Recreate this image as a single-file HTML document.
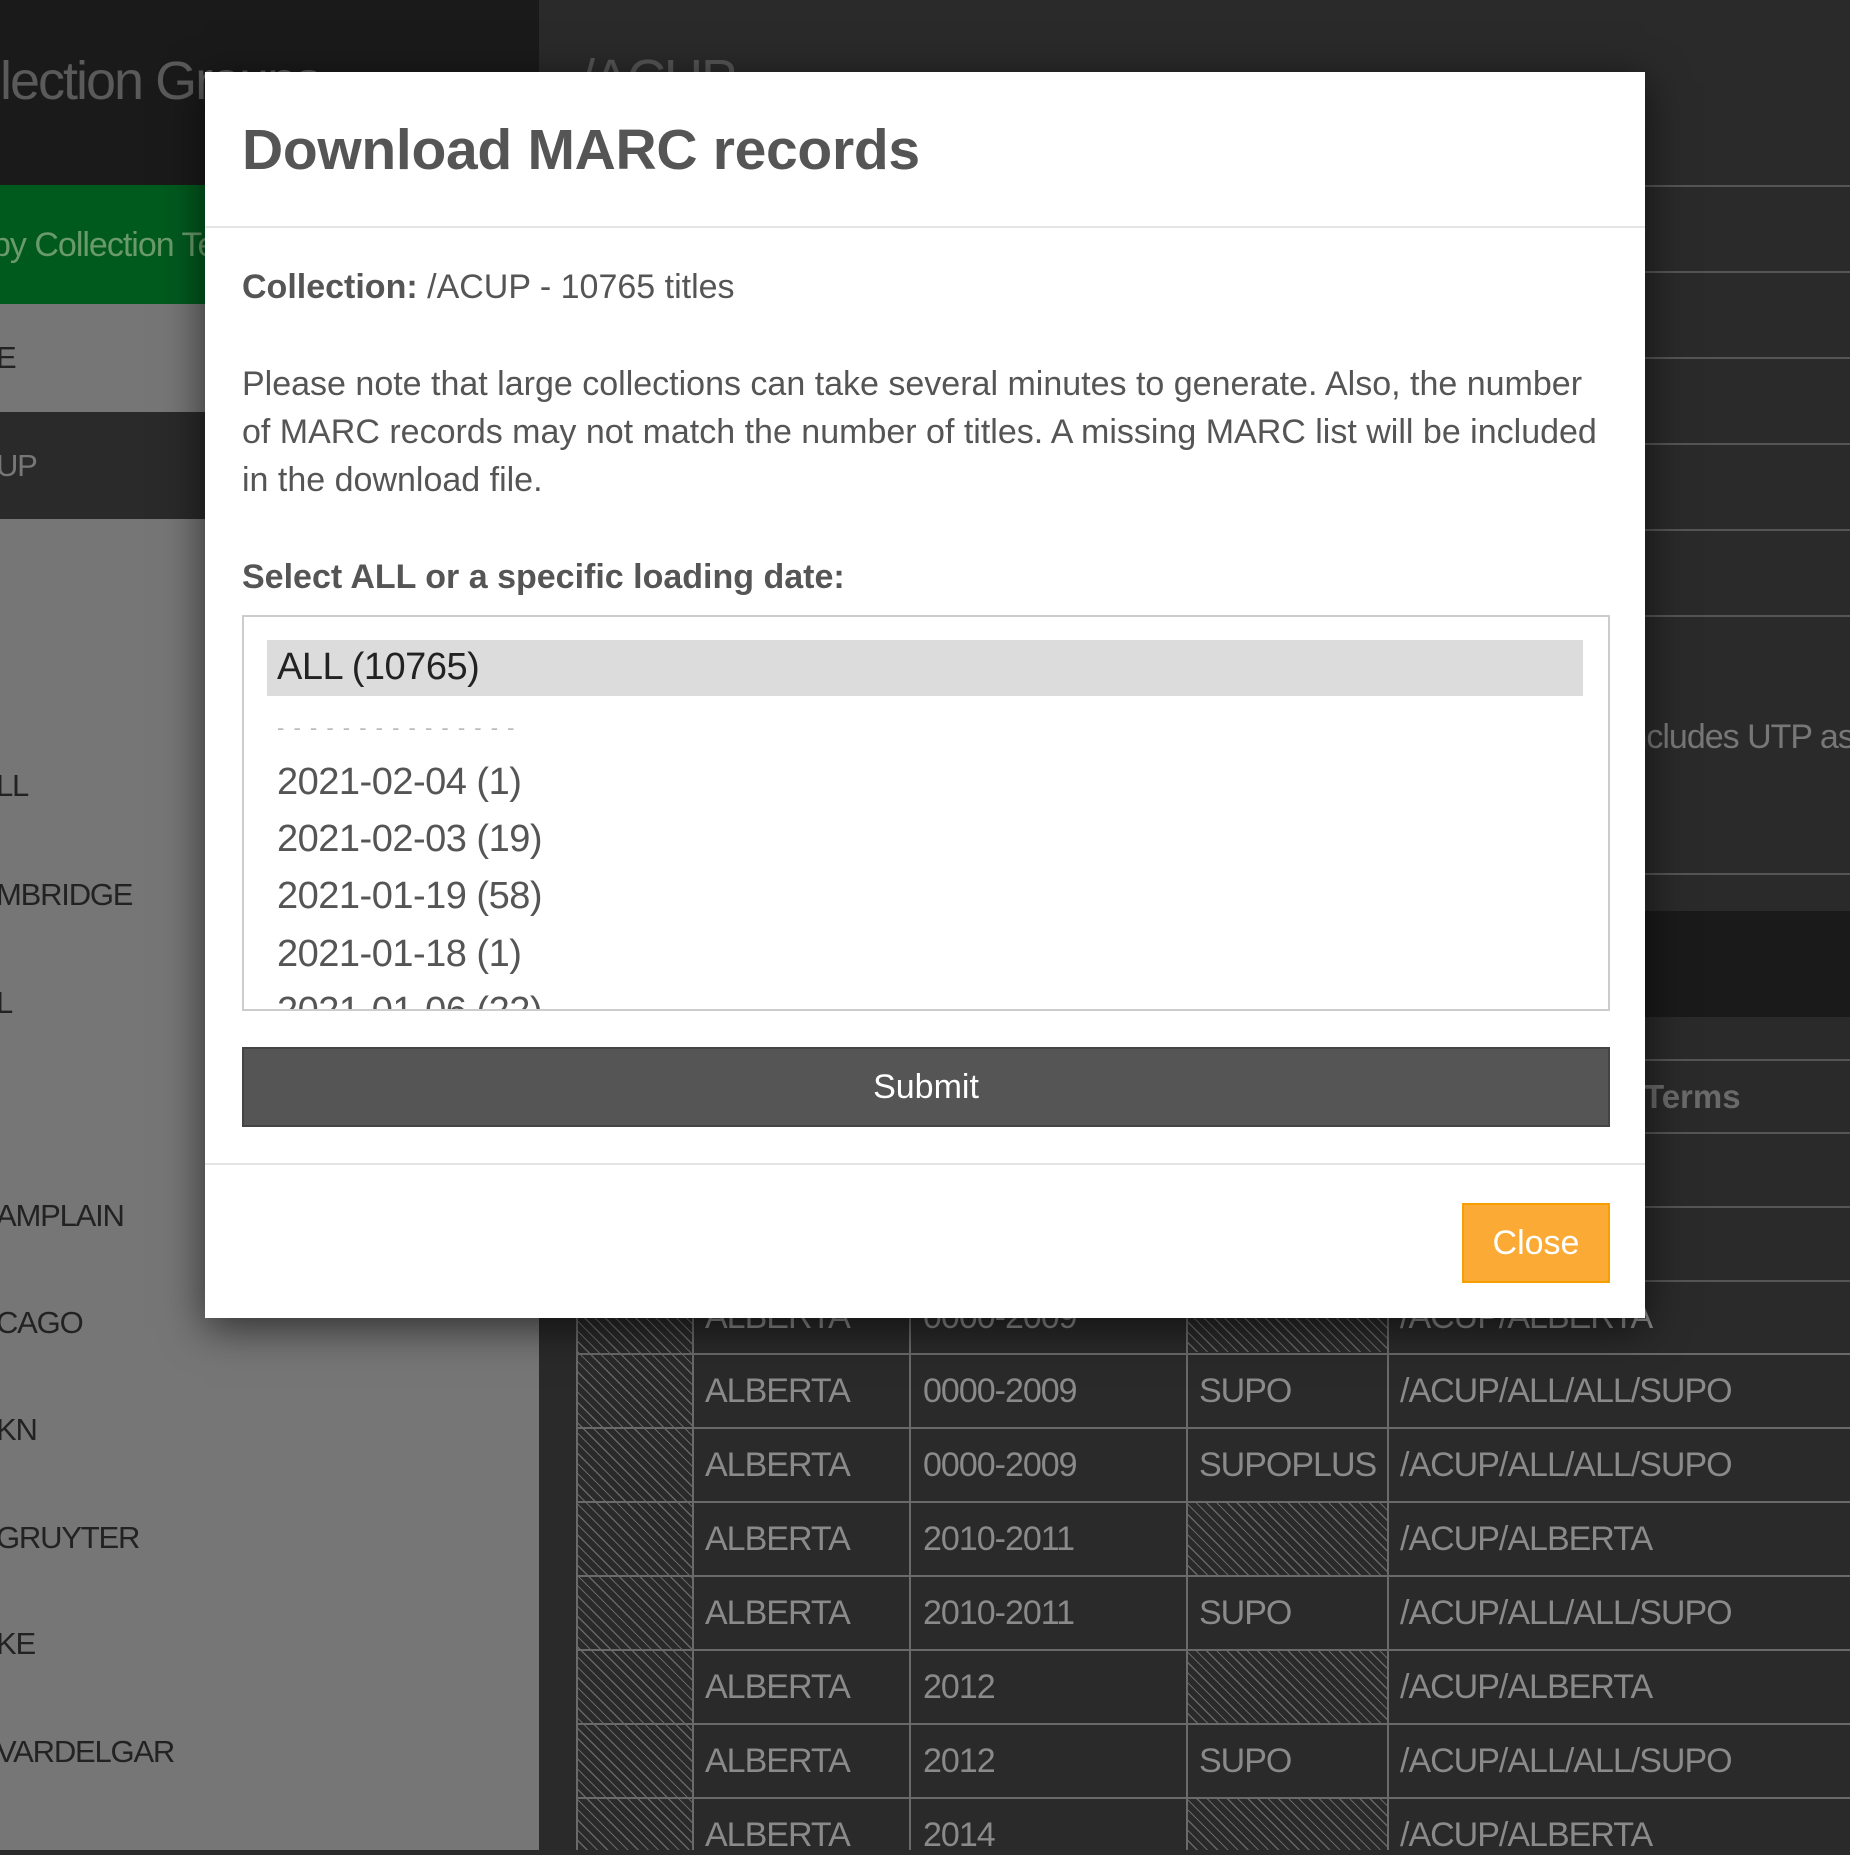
<!DOCTYPE html>
<html><head><meta charset="utf-8"><style>
*{margin:0;padding:0;box-sizing:border-box}
body{width:1850px;height:1850px;overflow:hidden;background:#2a2a2a;font-family:"Liberation Sans",sans-serif;position:relative}
.a{position:absolute;white-space:nowrap}
.side{left:0;top:0;width:539px;height:1850px;background:#767676}
.st{color:#222;font-size:31px;left:-4px;letter-spacing:-1.2px}
.hl{position:absolute;height:2px;background:#555;left:539px;right:0}
.tl{position:absolute;height:2px;background:#6a6a6a;left:576px;right:0}
.vl{position:absolute;width:2px;background:#6a6a6a;top:1290px;bottom:0}
.hat{position:absolute;background:repeating-linear-gradient(45deg,#2a2a2a 0 6px,#666 6px 7.2px)}
.tt{color:#8a8a8a;font-size:34px;letter-spacing:-1px}
.op{position:absolute;left:33px;font-size:38px;color:#555;letter-spacing:-0.5px;white-space:nowrap}
</style></head><body>
<div class="a side"></div>
<div class="a" style="left:0;top:0;width:539px;height:185px;background:#1a1a1a"></div>
<div class="a" style="left:-10px;top:50px;font-size:54px;color:#5a5a5a;letter-spacing:-2px">llection Groups</div>
<div class="a" style="left:0;top:185px;width:539px;height:119px;background:#005a1e"></div>
<div class="a" style="left:-8px;top:226px;font-size:34px;color:#6a9a6a;letter-spacing:-1px">by Collection Terms</div>
<div class="a" style="left:0;top:412px;width:539px;height:107px;background:#2a2a2a"></div>
<div class="a st" style="top:340px">E</div>
<div class="a st" style="top:448px;color:#777">UP</div>
<div class="a st" style="top:768px">LL</div>
<div class="a st" style="top:877px">MBRIDGE</div>
<div class="a st" style="top:985px">L</div>
<div class="a st" style="top:1198px">AMPLAIN</div>
<div class="a st" style="top:1305px">CAGO</div>
<div class="a st" style="top:1412px">KN</div>
<div class="a st" style="top:1520px">GRUYTER</div>
<div class="a st" style="top:1626px">KE</div>
<div class="a st" style="top:1734px">VARDELGAR</div>

<div class="a" style="left:580px;top:48px;font-size:54px;color:#555;letter-spacing:-2px">/ACUP</div>
<div class="hl" style="top:185px"></div><div class="hl" style="top:271px"></div><div class="hl" style="top:357px"></div><div class="hl" style="top:443px"></div><div class="hl" style="top:529px"></div><div class="hl" style="top:615px"></div><div class="hl" style="top:873px"></div>
<div class="a" style="left:1620px;top:718px;font-size:34px;color:#777;letter-spacing:-1px">Includes UTP as</div>
<div class="a" style="left:539px;right:0;top:911px;height:106px;background:#1a1a1a"></div>
<div class="hl" style="top:1059px"></div><div class="hl" style="top:1132px"></div><div class="hl" style="top:1206px"></div><div class="hl" style="top:1280px"></div>
<div class="a" style="left:1644px;top:1078px;font-size:33px;font-weight:bold;color:#6a6a6a">Terms</div>

<div class="hat" style="left:578px;top:1290px;width:114px;height:560px"></div>
<div class="hat" style="left:1188px;top:1290px;width:200px;height:62px"></div>
<div class="hat" style="left:1188px;top:1503px;width:200px;height:72px"></div>
<div class="hat" style="left:1188px;top:1651px;width:200px;height:72px"></div>
<div class="hat" style="left:1188px;top:1798px;width:200px;height:52px"></div>
<div class="vl" style="left:576px"></div><div class="vl" style="left:692px"></div><div class="vl" style="left:909px"></div><div class="vl" style="left:1186px"></div><div class="vl" style="left:1387px"></div>
<div class="tl" style="top:1353px"></div><div class="tl" style="top:1427px"></div><div class="tl" style="top:1501px"></div><div class="tl" style="top:1575px"></div><div class="tl" style="top:1649px"></div><div class="tl" style="top:1723px"></div><div class="tl" style="top:1797px"></div>
<div class="a tt" style="left:705px;top:1298px">ALBERTA</div><div class="a tt" style="left:923px;top:1298px">0000-2009</div><div class="a tt" style="left:1400px;top:1298px">/ACUP/ALBERTA</div>
<div class="a tt" style="left:705px;top:1372px">ALBERTA</div><div class="a tt" style="left:923px;top:1372px">0000-2009</div><div class="a tt" style="left:1199px;top:1372px">SUPO</div><div class="a tt" style="left:1400px;top:1372px">/ACUP/ALL/ALL/SUPO</div>
<div class="a tt" style="left:705px;top:1446px">ALBERTA</div><div class="a tt" style="left:923px;top:1446px">0000-2009</div><div class="a tt" style="left:1199px;top:1446px">SUPOPLUS</div><div class="a tt" style="left:1400px;top:1446px">/ACUP/ALL/ALL/SUPO</div>
<div class="a tt" style="left:705px;top:1520px">ALBERTA</div><div class="a tt" style="left:923px;top:1520px">2010-2011</div><div class="a tt" style="left:1400px;top:1520px">/ACUP/ALBERTA</div>
<div class="a tt" style="left:705px;top:1594px">ALBERTA</div><div class="a tt" style="left:923px;top:1594px">2010-2011</div><div class="a tt" style="left:1199px;top:1594px">SUPO</div><div class="a tt" style="left:1400px;top:1594px">/ACUP/ALL/ALL/SUPO</div>
<div class="a tt" style="left:705px;top:1668px">ALBERTA</div><div class="a tt" style="left:923px;top:1668px">2012</div><div class="a tt" style="left:1400px;top:1668px">/ACUP/ALBERTA</div>
<div class="a tt" style="left:705px;top:1742px">ALBERTA</div><div class="a tt" style="left:923px;top:1742px">2012</div><div class="a tt" style="left:1199px;top:1742px">SUPO</div><div class="a tt" style="left:1400px;top:1742px">/ACUP/ALL/ALL/SUPO</div>
<div class="a tt" style="left:705px;top:1816px">ALBERTA</div><div class="a tt" style="left:923px;top:1816px">2014</div><div class="a tt" style="left:1400px;top:1816px">/ACUP/ALBERTA</div>

<!-- modal -->
<div class="a" style="left:205px;top:72px;width:1440px;height:1246px;background:#fff;box-shadow:0 10px 40px rgba(0,0,0,.6)">
  <div class="a" style="left:37px;top:45px;font-size:57px;font-weight:bold;color:#555;letter-spacing:-0.3px">Download MARC records</div>
  <div class="a" style="left:0;right:0;top:154px;height:2px;background:#e5e5e5"></div>
  <div class="a" style="left:37px;top:196px;font-size:34px;color:#555"><b>Collection:</b> /ACUP - 10765 titles</div>
  <div class="a" style="left:37px;top:288px;font-size:34px;line-height:48px;color:#555;white-space:normal;width:1370px">Please note that large collections can take several minutes to generate. Also, the number of MARC records may not match the number of titles. A missing MARC list will be included in the download file.</div>
  <div class="a" style="left:37px;top:486px;font-size:34px;font-weight:bold;color:#555">Select ALL or a specific loading date:</div>
  <div class="a" style="left:37px;top:543px;width:1368px;height:396px;border:2px solid #ccc;overflow:hidden">
    <div class="a" style="left:23px;top:23px;width:1316px;height:56px;background:#dcdcdc"></div>
    <div class="op" style="top:29px;color:#222">ALL (10765)</div>
    <div class="a" style="left:33px;top:98px;font-size:22px;color:#bbb;letter-spacing:1.5px">- - - - - - - - - - - - - - -</div>
    <div class="op" style="top:144px">2021-02-04 (1)</div>
    <div class="op" style="top:201px">2021-02-03 (19)</div>
    <div class="op" style="top:258px">2021-01-19 (58)</div>
    <div class="op" style="top:316px">2021-01-18 (1)</div>
    <div class="op" style="top:373px">2021-01-06 (22)</div>
  </div>
  <div class="a" style="left:37px;top:975px;width:1368px;height:80px;background:#555;border:2px solid #444;color:#fff;font-size:34px;text-align:center;line-height:76px">Submit</div>
  <div class="a" style="left:0;right:0;top:1091px;height:2px;background:#e5e5e5"></div>
  <div class="a" style="left:1257px;top:1131px;width:148px;height:80px;background:#faaa35;border:2px solid #f5a000;color:#fff;font-size:34px;text-align:center;line-height:76px">Close</div>
</div>
</body></html>
